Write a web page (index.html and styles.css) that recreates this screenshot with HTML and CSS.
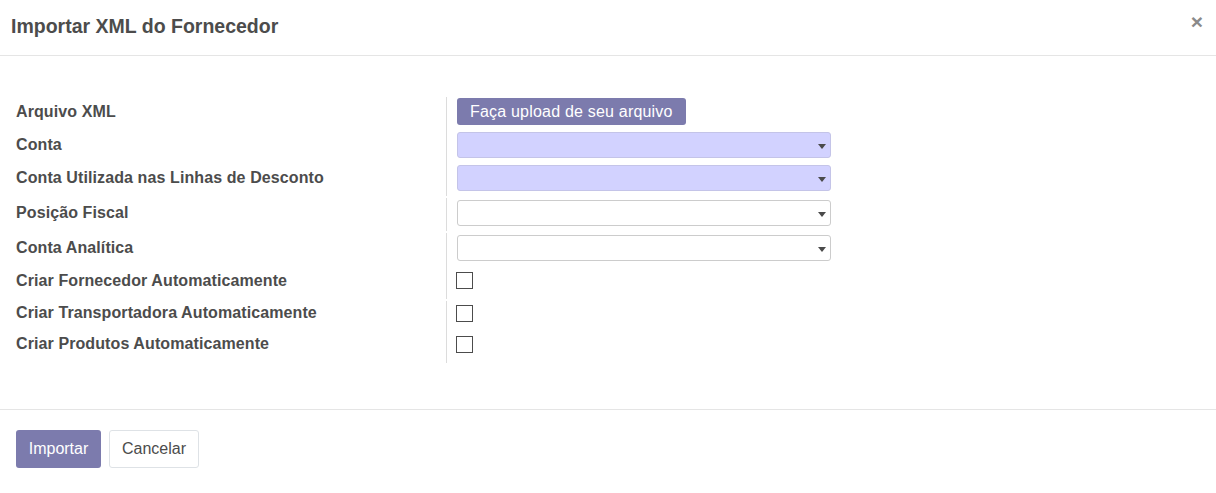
FILE: index.html
```html
<!DOCTYPE html>
<html lang="pt">
<head>
<meta charset="utf-8">
<title>Importar XML do Fornecedor</title>
<link rel="stylesheet" href="styles.css">
</head>
<body>
<div class="modal">
  <header class="modal-header">
    <h4 class="modal-title">Importar XML do Fornecedor</h4>
    <span class="close">×</span>
  </header>
  <main class="modal-body">
    <div class="group">
      <div class="row r33"><div class="label">Arquivo XML</div><div class="value"><span class="btn-upload">Faça upload de seu arquivo</span></div></div>
      <div class="row r33"><div class="label">Conta</div><div class="value"><div class="select required"><span class="caret"></span></div></div></div>
      <div class="row r33"><div class="label">Conta Utilizada nas Linhas de Desconto</div><div class="value"><div class="select required"><span class="caret"></span></div></div></div>
    </div>
    <div class="group">
      <div class="row r33"><div class="label">Posição Fiscal</div><div class="value"><div class="select"><span class="caret"></span></div></div></div>
    </div>
    <div class="group">
      <div class="row r33"><div class="label">Conta Analítica</div><div class="value"><div class="select"><span class="caret"></span></div></div></div>
      <div class="row r33"><div class="label">Criar Fornecedor Automaticamente</div><div class="value"><span class="check"></span></div></div>
    </div>
    <div class="group">
      <div class="row r28"><div class="label">Criar Transportadora Automaticamente</div><div class="value"><span class="check"></span></div></div>
      <div class="row r34"><div class="label">Criar Produtos Automaticamente</div><div class="value"><span class="check"></span></div></div>
    </div>
  </main>
  <footer class="modal-footer">
    <span class="btn btn-primary">Importar</span>
    <span class="btn btn-secondary">Cancelar</span>
  </footer>
</div>
</body>
</html>
```

FILE: styles.css
```css
* { box-sizing: border-box; }
html, body { margin: 0; padding: 0; background: #fff; }
body {
  font-family: "Liberation Sans", Arial, sans-serif;
  color: #4c4c4c;
  font-size: 16px;
}
.modal { width: 1216px; }
.modal-header {
  height: 56px;
  border-bottom: 1px solid #e5e5e5;
  display: flex;
  align-items: center;
  justify-content: space-between;
  padding: 0 13px 2px 11px;
}
.modal-title {
  margin: 0;
  font-size: 19.5px;
  font-weight: bold;
  color: #4c4c4c;
}
.close {
  font-size: 21px;
  font-weight: bold;
  color: #8a8a8a;
  line-height: 1;
  margin-top: -10px;
}
.modal-body {
  padding: 41px 16px 46px 16px;
  display: flex;
  flex-direction: column;
  gap: 2px;
}
.group { display: flex; flex-direction: column; }
.row { display: flex; align-items: stretch; }
.r33 { height: 33px; }
.r28 { height: 28px; }
.r34 { height: 34px; }
.label {
  width: 431px;
  border-right: 1px solid #dcdcdc;
  font-weight: bold;
  display: flex;
  align-items: center;
  white-space: nowrap;
  padding-bottom: 4px;
  letter-spacing: 0.1px;
}
.value {
  padding-left: 10px;
  display: flex;
  align-items: center;
}
.btn-upload {
  display: inline-flex;
  align-items: center;
  height: 27px;
  padding: 0 13px;
  background: #7c7bad;
  color: #fff;
  border-radius: 3px;
  font-size: 16px;
  letter-spacing: 0.2px;
  margin-top: -4px;
}
.select {
  width: 374px;
  height: 26px;
  border: 1px solid #ccc;
  border-radius: 3px;
  background: #fff;
  position: relative;
  margin-top: -4px;
}
.select.required { background: #d2d2ff; border-color: #c4c4e8; }
.caret {
  position: absolute;
  right: 4px;
  top: 11px;
  width: 0; height: 0;
  border-left: 4.5px solid transparent;
  border-right: 4.5px solid transparent;
  border-top: 5px solid #4a4a4a;
}
.check {
  width: 17px;
  height: 17px;
  border: 1px solid #4c4c4c;
  background: #fff;
  display: block;
  margin-left: -1px;
  margin-top: -4px;
}
.modal-footer {
  border-top: 1px solid #e5e5e5;
  padding: 20px 16px 25px;
  display: flex;
  gap: 8px;
}
.btn {
  display: inline-flex;
  align-items: center;
  height: 38px;
  padding: 0 12px;
  border-radius: 3px;
  font-size: 16px;
}
.btn-primary { background: #7c7bad; color: #fff; width: 85px; justify-content: center; }
.btn-secondary { background: #fff; color: #4c4c4c; border: 1px solid #dee2e6; width: 90px; justify-content: center; }
```
